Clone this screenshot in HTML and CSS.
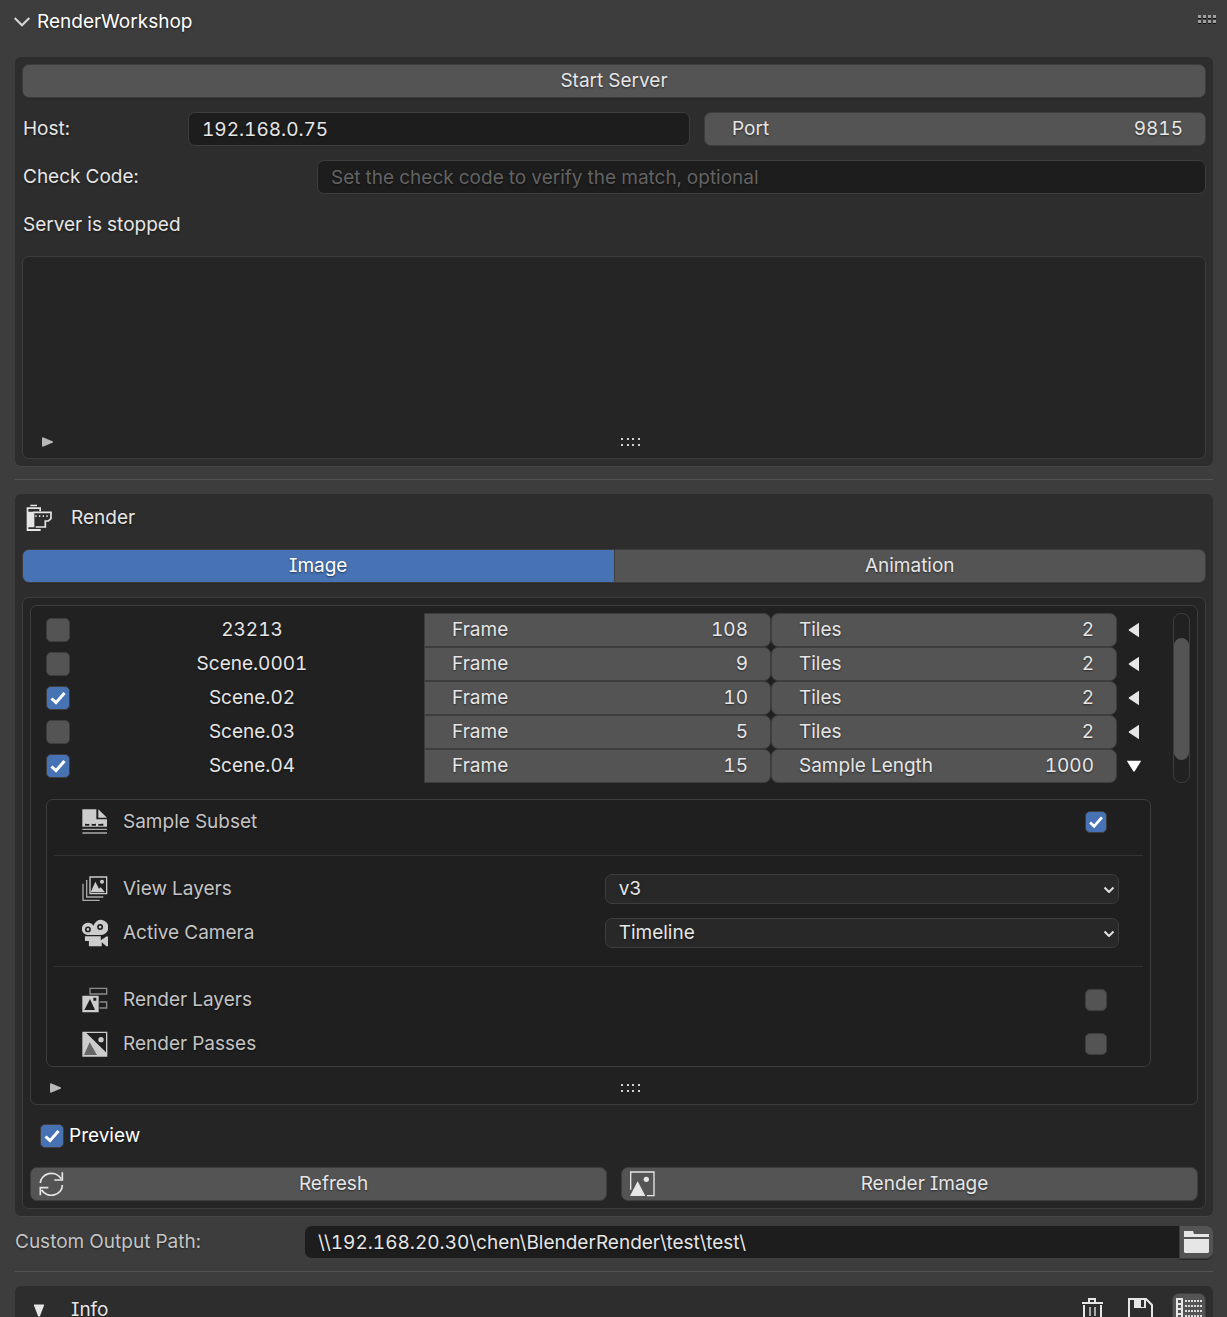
FILE: index.html
```html
<!DOCTYPE html>
<html lang="en">
<head>
<meta charset="utf-8">
<title>RenderWorkshop</title>
<meta name="viewport" content="width=device-width, initial-scale=1">
<link rel="stylesheet" href="styles.css">
</head>
<body>
<main class="sidebar">
  <header class="panel-header">
    <button class="plain panel-title" type="button" aria-expanded="true">
      <svg width="16" height="10" viewBox="0 0 16 10" fill="none" stroke="#d8d8d8" stroke-width="2"><path d="M.7 1l7.300 7.300L15.300 1"/></svg>
      RenderWorkshop
    </button>
    <svg class="grip" width="19" height="10" viewBox="0 0 19 10" aria-hidden="true"><path fill="#111" d="M0 3h3v1H0zM5 3h3v1H5zM10 3h3v1h-3zM15 3h3v1h-3zM0 8h3v1H0zM5 8h3v1H5zM10 8h3v1h-3zM15 8h3v1h-3z"/><path fill="#a0a0a0" d="M0 0h3v3H0zM5 0h3v3H5zM10 0h3v3h-3zM15 0h3v3h-3zM0 5h3v3H0zM5 5h3v3H5zM10 5h3v3h-3zM15 5h3v3h-3z"/></svg>
  </header>

  <section class="panel">
    <button class="btn" type="button">Start Server</button>
    <div class="host-row">
      <label for="host">Host:</label>
      <input class="text-field" id="host" type="text" value="192.168.0.75">
      <label class="number"><span>Port</span><input type="text" inputmode="numeric" value="9815"></label>
    </div>
    <div class="code-row">
      <label for="code">Check Code:</label>
      <input class="text-field" id="code" type="text" placeholder="Set the check code to verify the match, optional">
    </div>
    <p class="status">Server is stopped</p>
    <div class="list">
      <div class="list-empty"></div>
      <div class="list-footer">
        <button class="plain expand" type="button" aria-label="Show filter options"><svg width="11" height="10" viewBox="0 0 11 10"><path fill="#b8b8b8" d="M0 .5h1.500L11 4.500v1L1.500 9.500H0z"/></svg></button>
        <div class="resize"><svg width="19" height="8" viewBox="0 0 19 8"><path fill="#d0d0d0" d="M0 0h2v2H0zM6 0h2v2H6zM11 0h2v2h-2zM17 0h2v2h-2zM0 6h2v2H0zM6 6h2v2H6zM11 6h2v2h-2zM17 6h2v2h-2z"/></svg></div>
      </div>
    </div>
  </section>

  <hr class="divider">

  <section class="panel">
    <h2 class="section-title">
      <svg width="26" height="28" viewBox="78 252 78 84" fill="#e6e6e6"><path d="M91 254h20v5H91zM80 262h43v12h-5v-7H85v8h18v47H85v5h37v6H80z"/><path fill="none" stroke="#e6e6e6" stroke-width="5" d="M100 277h53v19l-8 7h-9v18h-29"/><path d="M106 286h4v5h-4zM117 286h4v5h-4zM128 286h4v5h-4zM139 286h4v5h-4z"/></svg>
      Render
    </h2>
    <div class="tabs" role="tablist">
      <button class="tab active" type="button" role="tab" aria-selected="true">Image</button>
      <button class="tab" type="button" role="tab" aria-selected="false">Animation</button>
    </div>

    <div class="box">
      <div class="list scenes">
        <div class="scenes-body">
          <div class="scenes-main">
            <ul class="rows" id="scenes">
              <li class="row">
                <input class="check" type="checkbox" id="s1"><label class="name" for="s1">23213</label>
                <label class="number flat"><span>Frame</span><input type="text" inputmode="numeric" value="108"></label>
                <label class="number"><span>Tiles</span><input type="text" inputmode="numeric" value="2"></label>
                <button class="plain toggle" type="button" aria-label="Show details"><svg width="12" height="16" viewBox="0 0 12 16"><path fill="#e6e6e6" d="M11 .8v14.400L.8 8.600V7.400z"/></svg></button>
              </li>
              <li class="row">
                <input class="check" type="checkbox" id="s2"><label class="name" for="s2">Scene.0001</label>
                <label class="number flat"><span>Frame</span><input type="text" inputmode="numeric" value="9"></label>
                <label class="number"><span>Tiles</span><input type="text" inputmode="numeric" value="2"></label>
                <button class="plain toggle" type="button" aria-label="Show details"><svg width="12" height="16" viewBox="0 0 12 16"><path fill="#e6e6e6" d="M11 .8v14.400L.8 8.600V7.400z"/></svg></button>
              </li>
              <li class="row">
                <input class="check" type="checkbox" id="s3" checked><label class="name" for="s3">Scene.02</label>
                <label class="number flat"><span>Frame</span><input type="text" inputmode="numeric" value="10"></label>
                <label class="number"><span>Tiles</span><input type="text" inputmode="numeric" value="2"></label>
                <button class="plain toggle" type="button" aria-label="Show details"><svg width="12" height="16" viewBox="0 0 12 16"><path fill="#e6e6e6" d="M11 .8v14.400L.8 8.600V7.400z"/></svg></button>
              </li>
              <li class="row">
                <input class="check" type="checkbox" id="s4"><label class="name" for="s4">Scene.03</label>
                <label class="number flat"><span>Frame</span><input type="text" inputmode="numeric" value="5"></label>
                <label class="number"><span>Tiles</span><input type="text" inputmode="numeric" value="2"></label>
                <button class="plain toggle" type="button" aria-label="Show details"><svg width="12" height="16" viewBox="0 0 12 16"><path fill="#e6e6e6" d="M11 .8v14.400L.8 8.600V7.400z"/></svg></button>
              </li>
              <li class="row">
                <input class="check" type="checkbox" id="s5" checked><label class="name" for="s5">Scene.04</label>
                <label class="number flat"><span>Frame</span><input type="text" inputmode="numeric" value="15"></label>
                <label class="number"><span>Sample Length</span><input type="text" inputmode="numeric" value="1000"></label>
                <button class="plain toggle" type="button" aria-label="Hide details" aria-expanded="true"><svg width="16" height="12" viewBox="0 0 16 12"><path fill="#fff" d="M.8.800h14.400L8.600 11.500H7.400z"/></svg></button>
              </li>
            </ul>

            <div class="details">
              <div class="detail">
                <svg width="26" height="26" viewBox="187 388 78 78" fill="#ccc"><path d="M188 389h42v30h32v14h-8v-1h-10v1h-7v-1h-11v1h-8v-1h-11v1h-7v-1h-12v1z M188 438h74v3h-74z M188 430h8v10h-8zM209 430h7v10h-7zM229 430h7v10h-7zM251 430h11v10h-11z M236 389l26 25h-26z"/><path fill="#aaa" d="M188 447h74v4h-74zM188 458h74v4h-74z"/></svg>
                <label for="subset">Sample Subset</label>
                <input class="check small" id="subset" type="checkbox" checked>
              </div>
              <hr class="divider">
              <div class="detail">
                <svg width="26" height="26" viewBox="187 588 78 78" fill="#ccc"><path fill="none" stroke="#aaa" stroke-width="4" d="M201 600v51h50M190 611v50h50"/><path fill="none" stroke="#ccc" stroke-width="4" d="M211 591h50v50h-50z"/><path d="M213 637l14-32 11 21 5-4 13 15z"/><circle cx="247" cy="605" r="6"/></svg>
                <label for="view">View Layers</label>
                <select class="select" id="view"><option>v3</option></select>
              </div>
              <div class="detail">
                <svg width="26" height="28" viewBox="24 28 79 84" fill="#ccc"><path fill-rule="evenodd" d="M42 39a19 19 0 0 1 17 9 23 23 0 1 1 22 28H42a18.500 18.500 0 0 1 0-37zM42 50a9 9 0 1 0 0 18 9 9 0 0 0 0-18zM79 43a9 9 0 1 0 0 18 9 9 0 0 0 0-18z"/><circle cx="42" cy="59" r="4"/><circle cx="79" cy="52" r="4"/><path d="M33 80h48v12l17-11h5v29h-5L84 98v12H45V94H33z"/></svg>
                <label for="camera">Active Camera</label>
                <select class="select" id="camera"><option>Timeline</option></select>
              </div>
              <hr class="divider">
              <div class="detail">
                <svg width="26" height="26" viewBox="187 82 78 78"><path fill="none" stroke="#8c8c8c" stroke-width="4" d="M211 86h50v17h-50zM240 127h21v18h-21"/><path fill="#ccc" fill-rule="evenodd" d="M188 108h49v50h-49zm6 43h32l-15-33zM221 114v9h9v-9z"/></svg>
                <label for="layers">Render Layers</label>
                <input class="check small" id="layers" type="checkbox">
              </div>
              <div class="detail">
                <svg width="26" height="26" viewBox="187 213 78 78"><path fill="#ccc" fill-rule="evenodd" d="M188 215h75v75h-75zm12 4l59 58v-58z"/><path fill="#666" d="M193 285l17-38 22 38z"/><circle cx="244" cy="239" r="8" fill="#ccc"/></svg>
                <label for="passes">Render Passes</label>
                <input class="check small" id="passes" type="checkbox">
              </div>
            </div>
          </div>
          <div class="scroll" role="scrollbar" aria-controls="scenes" aria-valuenow="50"><div class="thumb"></div></div>
        </div>
        <div class="list-footer">
          <button class="plain expand" type="button" aria-label="Show filter options"><svg width="11" height="10" viewBox="0 0 11 10"><path fill="#b8b8b8" d="M0 .5h1.500L11 4.500v1L1.500 9.500H0z"/></svg></button>
          <div class="resize"><svg width="19" height="8" viewBox="0 0 19 8"><path fill="#d0d0d0" d="M0 0h2v2H0zM6 0h2v2H6zM11 0h2v2h-2zM17 0h2v2h-2zM0 6h2v2H0zM6 6h2v2H6zM11 6h2v2h-2zM17 6h2v2h-2z"/></svg></div>
        </div>
      </div>

      <div class="preview"><input class="check" type="checkbox" id="preview" checked><label for="preview">Preview</label></div>

      <div class="actions">
        <button class="btn icon-btn" type="button">
          <svg width="26" height="26" viewBox="58 632 78 78" fill="none" stroke="#e6e6e6" stroke-width="5"><path d="M62 668a33 30 0 0 1 62-13M128 636v23h-24M128 674a33 30 0 0 1-62 15M62 705v-23h24"/></svg>
          <span>Refresh</span>
        </button>
        <button class="btn icon-btn" type="button">
          <svg width="26" height="26" viewBox="150 274 78 78" fill="#e6e6e6"><path fill="none" stroke="#e6e6e6" stroke-width="4" d="M152 330v-53h70v71h-21"/><path d="M150 349l22-43h2l22 43z"/><circle cx="199" cy="299" r="8"/></svg>
          <span>Render Image</span>
        </button>
      </div>
    </div>
  </section>

  <div class="path-row">
    <label for="path">Custom Output Path:</label>
    <input class="text-field" id="path" type="text" value="\\192.168.20.30\chen\BlenderRender\test\test\">
    <button class="btn browse" type="button" aria-label="Browse folders"><svg width="26" height="24" viewBox="0 0 26 24" fill="#e6e6e6"><path d="M0 1h9l1 3h15v3H0zM0 9h25v13l-1 1H1l-1-1z"/></svg></button>
  </div>

  <hr class="divider">

  <section class="panel info">
    <button class="plain collapse" type="button" aria-label="Collapse info"><svg width="10" height="13" viewBox="0 0 10 13"><path fill="#e6e6e6" d="M0 .5h10v1L5.800 12.500H4.200L0 1.500z"/></svg></button>
    <h2 class="info-title">Info</h2>
    <button class="plain tool" type="button" aria-label="Clear"><svg width="22" height="24" viewBox="0 0 22 24" fill="none" stroke="#e6e6e6" stroke-width="2"><path d="M0 5h21M7 4V1h6v3M2 7v15h17V7"/><path stroke="#aaa" d="M8 9v9M13 9v9"/></svg></button>
    <button class="plain tool" type="button" aria-label="Save"><svg width="26" height="24" viewBox="0 0 26 24" fill="none" stroke="#e6e6e6" stroke-width="2"><path d="M1 23V1h17l6 6v16z"/><path fill="#e6e6e6" stroke="none" fill-rule="evenodd" d="M6 1h12v9H6zm7 1v7h3V2z"/></svg></button>
    <button class="plain tool pressed" type="button" aria-label="Show log" aria-pressed="true"><svg width="26" height="24" viewBox="0 0 26 24"><path fill="#e6e6e6" fill-rule="evenodd" d="M0 0h7v24H0zM2 2v3h3V2zm0 5v3h3V7zm0 5v3h3v-3zm0 5v3h3v-3z"/><path fill="none" stroke="#ddd" stroke-width="2" stroke-dasharray="2 1" d="M9 3h17M9 8h17M9 13h17M9 18h17"/></svg></button>
  </section>
</main>
</body>
</html>
```

FILE: styles.css
```css
* { box-sizing: border-box; }

html, body {
  height: 100%;
  margin: 0;
  overflow: hidden;
}

body, button, input, select {
  color: #e6e6e6;
  font-family: Inter, "Open Sans", sans-serif;
  font-size: 19px;
  line-height: 24px;
  font-feature-settings: "tnum", "cv08";
  text-shadow: 0 1px 2px rgba(0, 0, 0, .5);
}

body { background: #3d3d3d; }

svg { display: block; flex: none; }

h2, p, ul { margin: 0; padding: 0; font-size: 19px; font-weight: 400; }

.sidebar { padding: 0 14px 0 15px; }

.plain {
  display: flex;
  align-items: center;
  padding: 0;
  border: 0;
  background: none;
}

.panel-header {
  display: flex;
  align-items: flex-start;
  justify-content: space-between;
  height: 57px;
  margin: 0 -4px 0 -1px;
}
.panel-title { gap: 7px; height: 44px; color: #fff; }
.grip { margin-top: 15px; }

.panel {
  display: flex;
  flex-direction: column;
  gap: 14px;
  padding: 7px;
  border-radius: 6px;
  background: #2d2d2d;
  box-shadow: 0 1px 0 #444;
}

.divider {
  width: 100%;
  height: 1px;
  margin: 13px 0 14px;
  border: 0;
  background: #545454;
}

.btn, .tab {
  height: 34px;
  padding: 0;
  border: 1px solid #3d3d3d;
  border-radius: 7px;
  background: #545454;
  box-shadow: 0 1px 0 #272727;
}

.text-field {
  width: 100%;
  min-width: 0;
  height: 34px;
  padding: 0 13px;
  border: 1px solid #3d3d3d;
  border-radius: 7px;
  outline: 0;
  background: #1d1d1d;
}
.text-field::placeholder { color: #636363; opacity: 1; }

.number {
  display: flex;
  align-items: center;
  min-width: 0;
  height: 34px;
  padding: 0 22px 0 27px;
  border: 1px solid #3d3d3d;
  border-radius: 7px;
  background: #545454;
}
.number span { white-space: nowrap; }
.number input {
  flex: 1;
  width: 0;
  padding: 0;
  border: 0;
  outline: 0;
  background: none;
  text-align: right;
}
.number.flat { border-radius: 0 7px 7px 0; }

.host-row, .code-row { display: grid; align-items: center; gap: 14px; }
.host-row { grid-template-columns: 152px 1fr 1fr; }
.code-row { grid-template-columns: 281px 1fr; }
.host-row > label:first-child, .code-row label, .status { padding-left: 1px; }

.status { line-height: 34px; }

.list {
  border: 1px solid #3d3d3d;
  border-radius: 7px;
  background: #252525;
}
.list-empty { height: 168px; }
.list-footer { display: flex; height: 33px; }
.expand { justify-content: flex-end; width: 33px; padding-right: 3px; }
.resize { display: flex; flex: 1; align-items: center; justify-content: center; }

.section-title {
  display: flex;
  align-items: center;
  gap: 19px;
  height: 34px;
  padding-left: 4px;
}

.tabs { display: flex; }
.tab { flex: 1; border-left: 0; border-radius: 0 7px 7px 0; }
.tab.active {
  border-left: 1px solid #3d3d3d;
  border-radius: 7px 0 0 7px;
  background: #4772b3;
  color: #fff;
}

.box {
  display: flex;
  flex-direction: column;
  gap: 14px;
  padding: 7px;
  border: 1px solid #3d3d3d;
  border-radius: 7px;
  background: #252525;
}

.scenes { background: #212121; }
.scenes-body {
  display: flex;
  align-items: flex-start;
  gap: 22px;
  padding: 7px 7px 4px 15px;
}
.scenes-main { flex: 1; min-width: 0; }

.rows { list-style: none; }
.row {
  display: grid;
  grid-template-columns: 34px 344fr 347fr 346fr 34px;
  align-items: center;
}
.name { text-align: center; }
.toggle { justify-content: center; height: 34px; }

.scroll {
  width: 17px;
  height: 170px;
  padding: 24px 0 0;
  border: 1px solid #3d3d3d;
  border-radius: 8px;
}
.thumb { height: 122px; border-radius: 8px; background: #545454; }

.check {
  appearance: none;
  width: 24px;
  height: 24px;
  margin: 0;
  border: 1px solid #3d3d3d;
  border-radius: 5px;
  background: #545454;
}
.check:checked {
  background: #4772b3 url("data:image/svg+xml,%3Csvg xmlns='http://www.w3.org/2000/svg' viewBox='0 0 22 22' fill='none' stroke='white' stroke-width='3'%3E%3Cpath d='M4.500 11.500l4.500 4.200L17.500 6'/%3E%3C/svg%3E") center / 100% no-repeat;
}
.check.small { width: 22px; height: 22px; }

.details {
  display: flex;
  flex-direction: column;
  gap: 14px;
  margin-top: 16px;
  padding: 7px;
  border: 1px solid #3d3d3d;
  border-radius: 7px;
  background: #1f1f1f;
}
.details .divider { margin: 4px 0; background: #333; }
.detail {
  display: flex;
  align-items: center;
  height: 30px;
  padding: 0 24px 0 28px;
  color: #c4c4c4;
}
.detail label { flex: 1; padding-left: 15px; }
.detail .check { margin-right: 12px; }

.select {
  appearance: none;
  flex: none;
  width: 49.6%;
  height: 30px;
  padding: 0 30px 0 13px;
  border: 1px solid #3d3d3d;
  border-radius: 7px;
  background: #282828 url("data:image/svg+xml,%3Csvg xmlns='http://www.w3.org/2000/svg' width='12' height='8' fill='none' stroke='%23e0e0e0' stroke-width='2'%3E%3Cpath d='M1.500 2.500L6 7l4.500-4.500'/%3E%3C/svg%3E") right 3px center no-repeat;
}

.preview {
  display: flex;
  align-items: center;
  gap: 5px;
  height: 34px;
  padding-left: 10px;
  color: #fff;
}

.actions { display: grid; grid-template-columns: 1fr 1fr; gap: 14px; }
.icon-btn { display: flex; align-items: center; padding: 0 8px; }
.icon-btn span { flex: 1; padding-left: 4px; text-align: center; }

.path-row {
  display: grid;
  grid-template-columns: 290px 1fr 34px;
  align-items: center;
  margin-top: 9px;
  color: #c4c4c4;
}
.path-row .text-field { border-width: 1px 0; border-radius: 7px 0 0 7px; }
.path-row + .divider { margin-top: 12px; }
.browse {
  display: flex;
  align-items: center;
  justify-content: center;
  border-right: 0;
  border-radius: 0 7px 7px 0;
}

.info { flex-direction: row; align-items: center; }
.collapse { justify-content: center; width: 34px; height: 34px; }
.info-title { flex: 1; padding-left: 1px; line-height: 34px; }
.tool { justify-content: center; width: 34px; height: 34px; }
.pressed { border: 1px solid #3d3d3d; border-radius: 7px; background: #545454; }
```
